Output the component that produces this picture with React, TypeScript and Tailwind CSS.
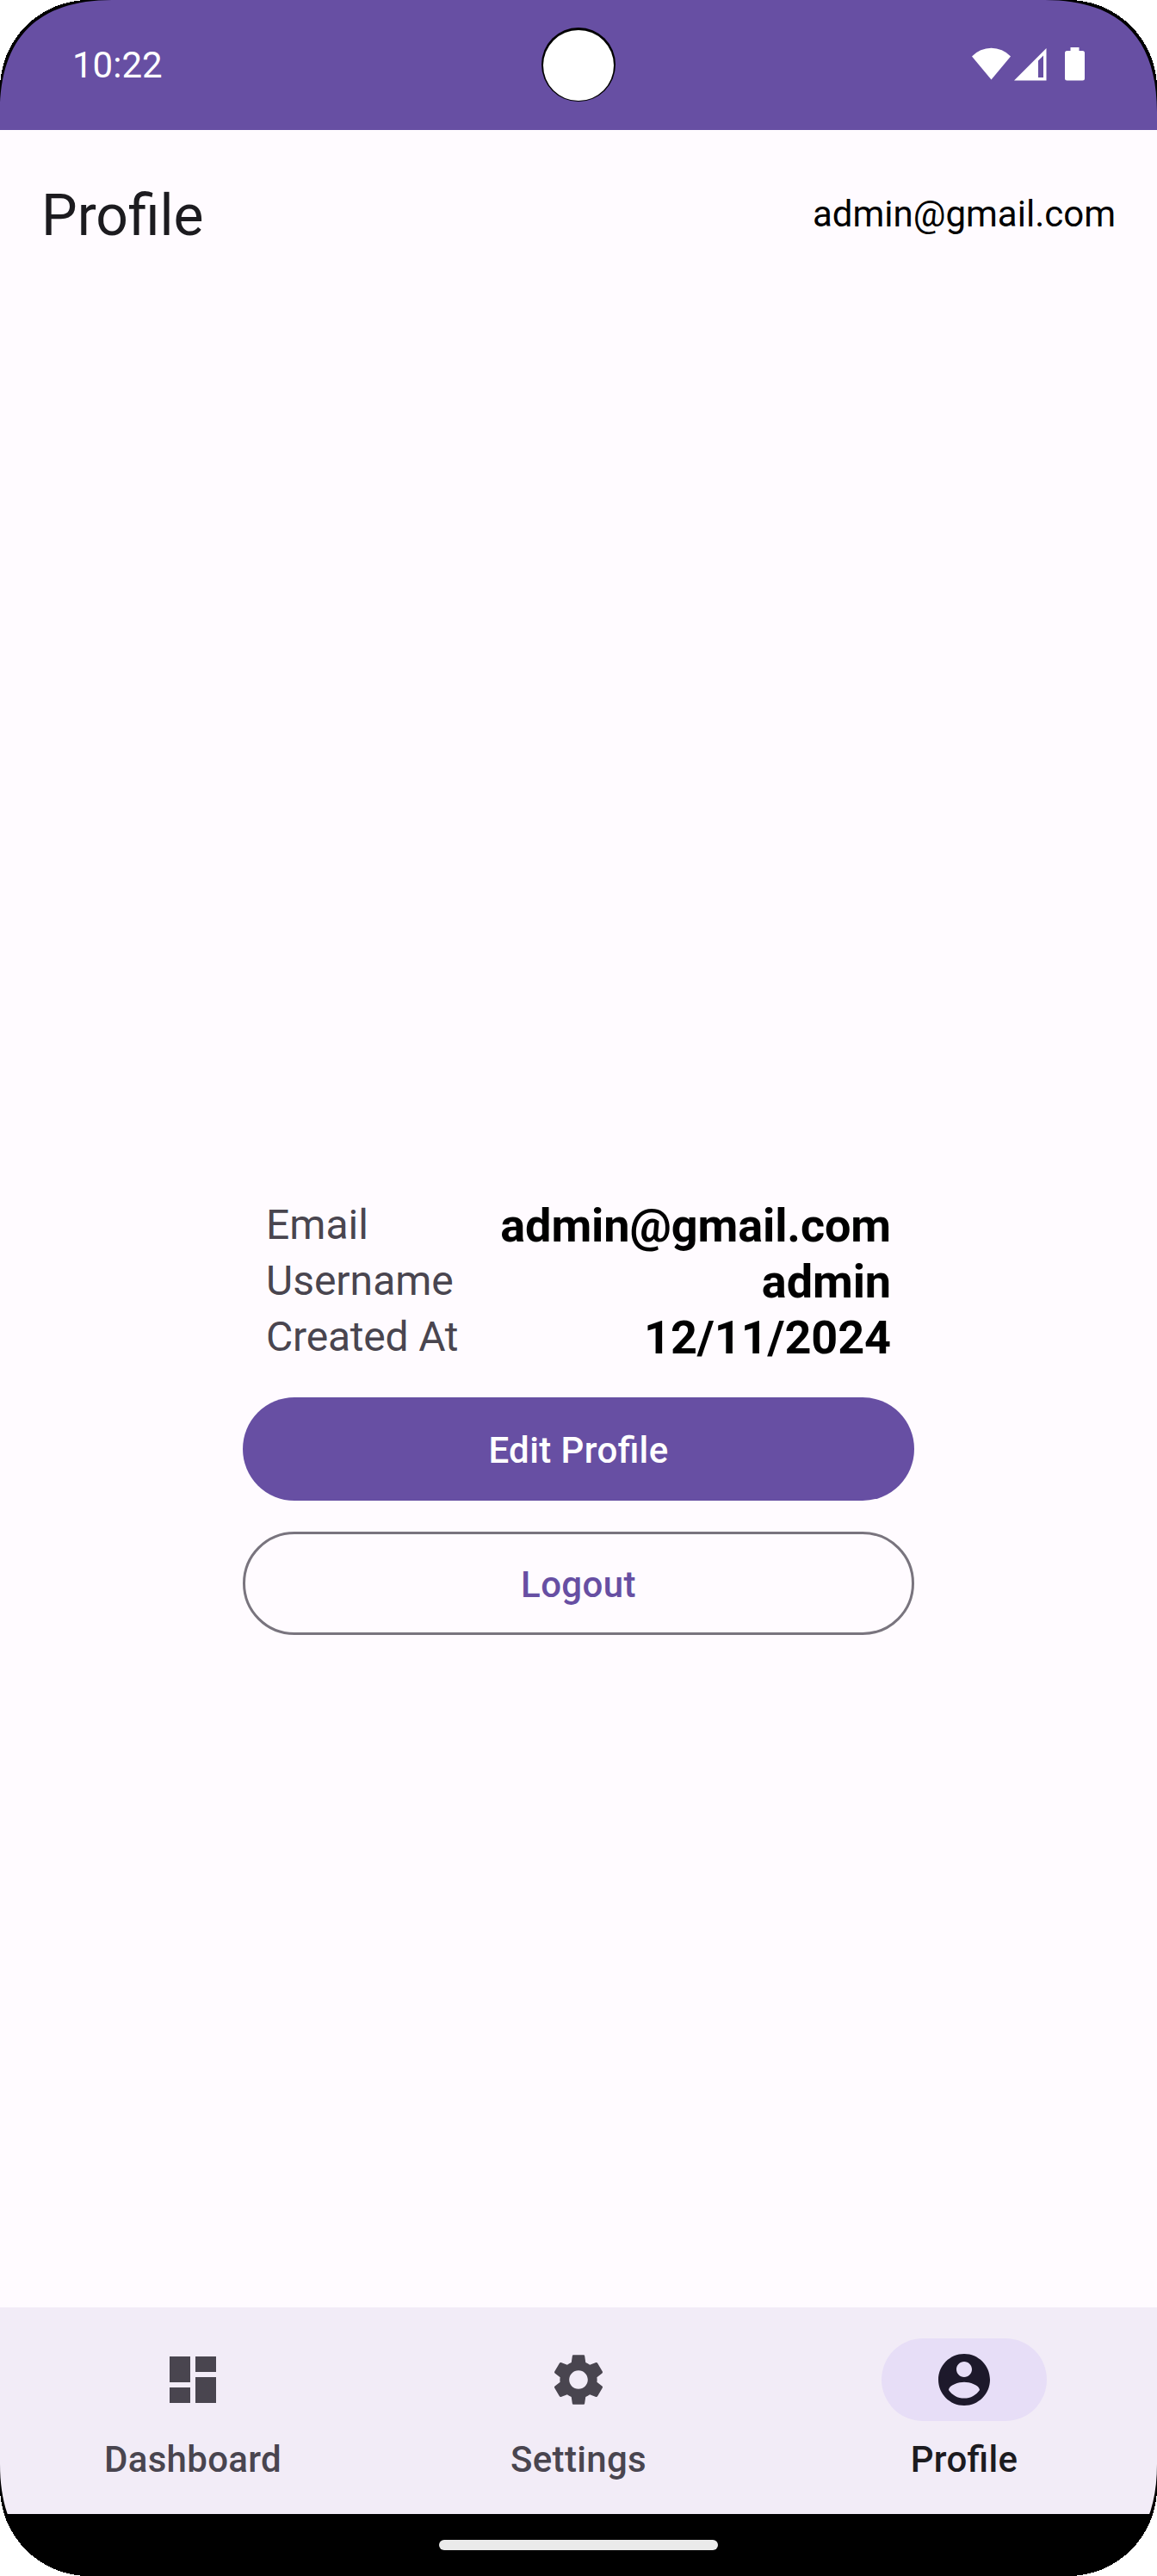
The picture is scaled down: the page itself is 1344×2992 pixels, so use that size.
import React from "react";

type CornerProps = { className: string };

/* Rounded display corner: black bezel sliver with the page colour outside it. */
function Corner({ className }: CornerProps) {
  return (
    <svg viewBox="0 0 132 132" className={`absolute z-10 h-[132px] w-[132px] ${className}`}>
      <path d="M0 0H130C44 0 0 44 0 130Z" fill="#000" />
      <path d="M0 0H103A103 103 0 0 0 0 103Z" fill="#fff" shapeRendering="crispEdges" />
    </svg>
  );
}

function StatusBar() {
  return (
    <header className="relative flex h-[151px] items-center justify-between bg-[#674fa3] px-[84px]">
      <span className="text-[42px] leading-[50px] text-white">10:22</span>
      <div className="absolute left-[629px] top-[32px] h-[86px] w-[86px] rounded-full bg-black">
        <div className="ml-[2px] mt-[3px] h-[82px] w-[82px] rounded-full bg-white" />
      </div>
      <svg viewBox="0 0 132 40" className="mb-[3px] h-[40px] w-[132px]" fill="#fff">
        <path d="M1 11.5A31 31 0 0 1 46 11.5L23.5 38.5Z" />
        <path fillRule="evenodd" d="M50 39.5L87.5 2V39.5ZM78 16.500V36H84V10.500Z" />
        <path d="M115.5 1H125.5V5H129.500Q132 5 132 7.500V37Q132 39.500 129.500 39.500H111.500Q109 39.500 109 37V7.500Q109 5 111.500 5H115.500Z" />
      </svg>
    </header>
  );
}

function TopBar() {
  return (
    <div className="flex h-[192px] items-center justify-between px-[48px]">
      <h1 className="pt-[7px] text-[66px] leading-[84px] text-[#1c1b1f]">Profile</h1>
      <span className="pt-[3px] text-[42px] leading-[60px] text-black">admin@gmail.com</span>
    </div>
  );
}

const details = [
  { label: "Email", value: "admin@gmail.com", tracking: "tracking-normal" },
  { label: "Username", value: "admin", tracking: "tracking-normal" },
  { label: "Created At", value: "12/11/2024", tracking: "tracking-[-0.2px]" },
];

function Details() {
  return (
    <dl className="flex flex-col px-[27px]">
      {details.map(({ label, value, tracking }) => (
        <div key={label} className="flex h-[65px] items-center justify-between">
          <dt className={`text-[48px] leading-[65px] text-[#49454f] ${tracking}`}>{label}</dt>
          <dd className="pt-[2px] text-[54px] font-bold leading-[65px] tracking-[-0.1px] text-black">{value}</dd>
        </div>
      ))}
    </dl>
  );
}

const tabs = [
  {
    label: "Dashboard",
    active: false,
    path: "M3 13h8V3H3v10zm0 8h8v-6H3v6zm10 0h8V11h-8v10zm0-18v6h8V3h-8z",
  },
  {
    label: "Settings",
    active: false,
    path: "M19.14 12.94c.04-.3.06-.61.06-.94 0-.32-.02-.64-.07-.94l2.03-1.58c.18-.14.23-.41.12-.61l-1.92-3.32c-.12-.22-.37-.29-.59-.22l-2.39.96c-.5-.38-1.03-.7-1.62-.94l-.36-2.54c-.04-.24-.24-.41-.48-.41h-3.84c-.24 0-.43.17-.47.41l-.36 2.54c-.59.24-1.13.57-1.62.94l-2.39-.96c-.22-.08-.47 0-.59.22L2.74 8.87c-.12.21-.08.47.12.61l2.03 1.58c-.05.3-.09.63-.09.94s.02.64.07.94l-2.03 1.58c-.18.14-.23.41-.12.61l1.92 3.32c.12.22.37.29.59.22l2.39-.96c.5.38 1.03.7 1.62.94l.36 2.54c.05.24.24.41.48.41h3.84c.24 0 .44-.17.47-.41l.36-2.54c.59-.24 1.13-.56 1.62-.94l2.39.96c.22.08.47 0 .59-.22l1.92-3.32c.12-.22.07-.47-.12-.61l-2.01-1.58zM12 15.6c-1.98 0-3.6-1.62-3.6-3.6s1.62-3.6 3.6-3.6 3.6 1.62 3.6 3.6-1.62 3.6-3.6 3.6z",
  },
  {
    label: "Profile",
    active: true,
    path: "M12 2C6.48 2 2 6.48 2 12s4.48 10 10 10 10-4.48 10-10S17.52 2 12 2zm0 3c1.66 0 3 1.34 3 3s-1.34 3-3 3-3-1.34-3-3 1.34-3 3-3zm0 14.2c-2.5 0-4.71-1.28-6-3.22.03-1.99 4-3.08 6-3.08 1.99 0 5.97 1.09 6 3.08-1.29 1.94-3.5 3.22-6 3.22z",
  },
];

function BottomTabs() {
  return (
    <nav className="grid h-[240px] grid-cols-3 bg-[#f2ecf7] pt-[36px]">
      {tabs.map(({ label, active, path }) => (
        <div key={label} className="flex flex-col items-center gap-[12px]">
          <div
            className={`flex h-[96px] w-[192px] items-center justify-center rounded-full ${
              active ? "bg-[#e7def7] text-[#1d192b]" : "text-[#49454f]"
            }`}
          >
            <svg viewBox="0 0 24 24" className="h-[72px] w-[72px]" fill="currentColor">
              <path d={path} />
            </svg>
          </div>
          <span
            className={`pt-[3px] text-[42px] font-medium leading-[60px] tracking-[0.3px] [font-feature-settings:'liga'_1] ${
              active ? "text-[#1c1b1f]" : "text-[#49454f]"
            }`}
          >
            {label}
          </span>
        </div>
      ))}
    </nav>
  );
}

export default function App() {
  return (
    <div className="relative flex h-[2992px] w-[1344px] flex-col overflow-hidden bg-[#fffbff] font-[Roboto,sans-serif]">
      <StatusBar />
      <TopBar />
      <main className="flex flex-1 flex-col items-center pt-[1047px]">
        <div className="flex w-[780px] flex-col">
          <Details />
          <button className="mt-[38px] flex h-[120px] items-center justify-center rounded-full bg-[#674fa3] pt-[3px] text-[42px] font-medium leading-[60px] tracking-[0.4px] text-white [font-feature-settings:'liga'_1]">
            Edit Profile
          </button>
          <button className="mt-[36px] flex h-[120px] items-center justify-center rounded-full border-[3px] border-[#79747e] pt-[3px] text-[42px] font-medium leading-[60px] tracking-[0.4px] text-[#674fa3]">
            Logout
          </button>
        </div>
      </main>
      <BottomTabs />
      <footer className="flex h-[72px] items-center justify-center bg-black">
        <div className="h-[12px] w-[324px] rounded-full bg-[#eaeaea]" />
      </footer>
      <Corner className="left-0 top-0" />
      <Corner className="right-0 top-0 -scale-x-100" />
      <Corner className="bottom-0 left-0 -scale-y-100" />
      <Corner className="bottom-0 right-0 rotate-180" />
    </div>
  );
}
